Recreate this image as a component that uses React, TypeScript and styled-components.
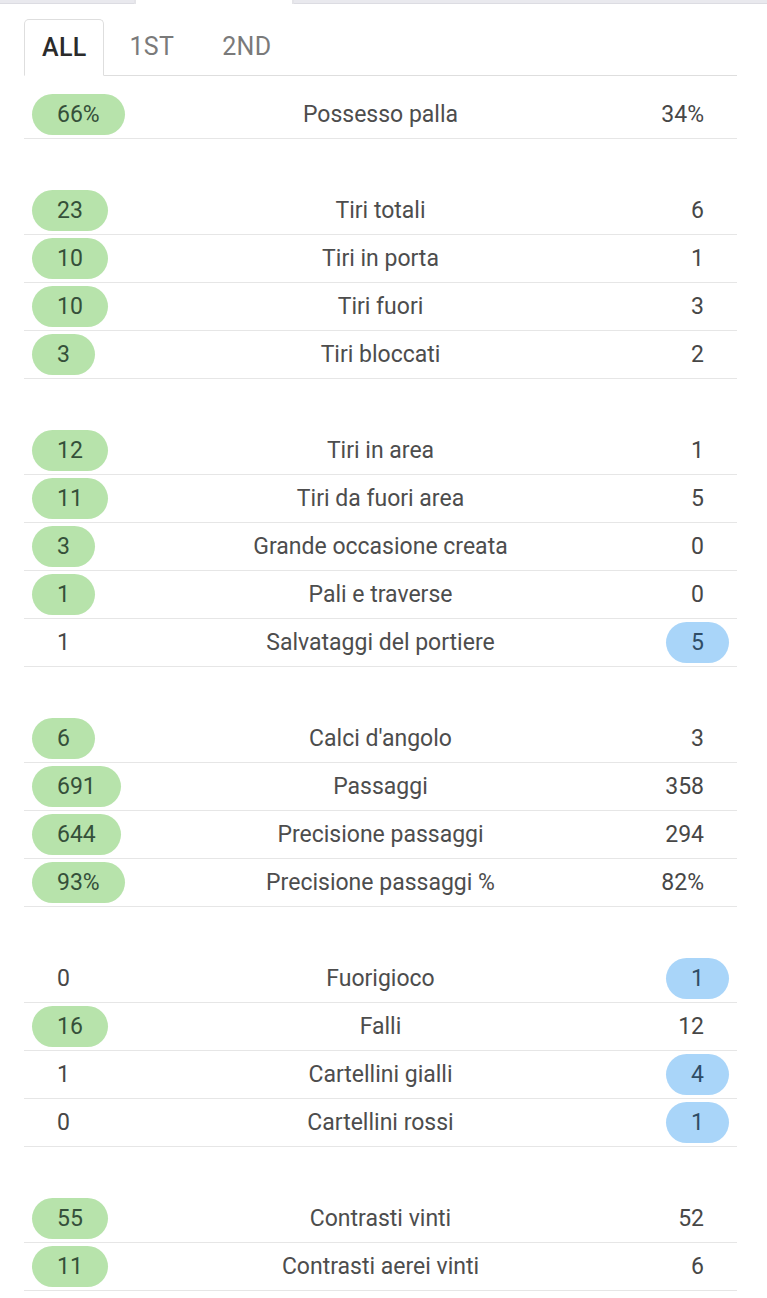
import React, { useState } from "react";
import styled, { createGlobalStyle } from "styled-components";

const Global = createGlobalStyle`
  html, body { margin: 0; padding: 0; background: #ffffff; }
  body { font-family: Roboto, "Noto Sans", Arial, sans-serif; -webkit-font-smoothing: antialiased; }
`;

const Page = styled.div`
  width: 767px;
  background: #fff;
`;

const TopStrip = styled.div`
  display: flex;
  height: 4px;
`;

const StripPart = styled.div<{ $active?: boolean; $w?: number }>`
  ${(p) => (p.$w ? `width: ${p.$w}px;` : "flex: 1;")}
  background: ${(p) => (p.$active ? "#ffffff" : "#e9e9ee")};
  border-bottom: ${(p) => (p.$active ? "none" : "1px solid #dcdce2")};
  border-left: ${(p) => (p.$active ? "2px solid #e4e4e8" : "none")};
  border-right: ${(p) => (p.$active ? "2px solid #e4e4e8" : "none")};
`;

const Content = styled.div`
  padding: 15px 30px 0 24px;
`;

const Tabs = styled.div`
  display: flex;
  align-items: flex-end;
  gap: 2px;
  border-bottom: 1px solid #dedede;
  height: 56px;
  margin-bottom: 15px;
`;

const Tab = styled.button<{ $active?: boolean }>`
  height: 57px;
  margin-bottom: ${(p) => (p.$active ? "-1px" : "0")};
  padding: ${(p) => (p.$active ? "0 17px" : "0 22px")};
  background: ${(p) => (p.$active ? "#fff" : "transparent")};
  border: 1px solid ${(p) => (p.$active ? "#dedede" : "transparent")};
  border-bottom-color: ${(p) => (p.$active ? "#fff" : "transparent")};
  border-radius: 5px 5px 0 0;
  font-family: Roboto, Arial, sans-serif;
  font-size: 25px;
  font-weight: ${(p) => (p.$active ? 500 : 400)};
  color: ${(p) => (p.$active ? "#2b2b2b" : "#7a7a7a")};
  letter-spacing: 0.3px;
  cursor: pointer;
  display: flex;
  align-items: center;
`;

const Row = styled.div`
  display: grid;
  grid-template-columns: 160px 1fr 160px;
  align-items: center;
  height: 47px;
  border-bottom: 1px solid #e6e6e6;
`;

const Spacer = styled.div`
  height: 48px;
`;

const Label = styled.div`
  text-align: center;
  font-size: 23px;
  color: #4d4d4d;
  white-space: nowrap;
`;

const Cell = styled.div<{ $side: "l" | "r" }>`
  display: flex;
  justify-content: ${(p) => (p.$side === "l" ? "flex-start" : "flex-end")};
  padding: ${(p) => (p.$side === "l" ? "0 0 0 8px" : "0 8px 0 0")};
`;

const Value = styled.span<{ $tone?: "green" | "blue" }>`
  display: inline-flex;
  align-items: center;
  justify-content: center;
  height: 41px;
  padding: 0 25px;
  border-radius: 21px;
  font-size: 23px;
  background: ${(p) =>
    p.$tone === "green" ? "#b7e3ab" : p.$tone === "blue" ? "#a9d5f9" : "transparent"};
  color: ${(p) =>
    p.$tone === "green" ? "#35503a" : p.$tone === "blue" ? "#2f4d66" : "#474747"};
`;

type Stat = [string, string, string];

const groups: Stat[][] = [
  [["66%", "Possesso palla", "34%"]],
  [
    ["23", "Tiri totali", "6"],
    ["10", "Tiri in porta", "1"],
    ["10", "Tiri fuori", "3"],
    ["3", "Tiri bloccati", "2"],
  ],
  [
    ["12", "Tiri in area", "1"],
    ["11", "Tiri da fuori area", "5"],
    ["3", "Grande occasione creata", "0"],
    ["1", "Pali e traverse", "0"],
    ["1", "Salvataggi del portiere", "5"],
  ],
  [
    ["6", "Calci d'angolo", "3"],
    ["691", "Passaggi", "358"],
    ["644", "Precisione passaggi", "294"],
    ["93%", "Precisione passaggi %", "82%"],
  ],
  [
    ["0", "Fuorigioco", "1"],
    ["16", "Falli", "12"],
    ["1", "Cartellini gialli", "4"],
    ["0", "Cartellini rossi", "1"],
  ],
  [
    ["55", "Contrasti vinti", "52"],
    ["11", "Contrasti aerei vinti", "6"],
  ],
];

const num = (s: string) => parseFloat(s.replace("%", ""));

export default function App() {
  const [tab, setTab] = useState("ALL");
  return (
    <Page>
      <Global />
      <TopStrip>
        <StripPart $w={134} />
        <StripPart $w={156} $active />
        <StripPart />
      </TopStrip>
      <Content>
        <Tabs>
          {["ALL", "1ST", "2ND"].map((t) => (
            <Tab key={t} $active={tab === t} onClick={() => setTab(t)}>
              {t}
            </Tab>
          ))}
        </Tabs>
        {groups.map((g, gi) => (
          <React.Fragment key={gi}>
            {gi > 0 && <Spacer />}
            {g.map(([l, label, r]) => {
              const lv = num(l);
              const rv = num(r);
              return (
                <Row key={label}>
                  <Cell $side="l">
                    <Value $tone={lv > rv ? "green" : undefined}>{l}</Value>
                  </Cell>
                  <Label>{label}</Label>
                  <Cell $side="r">
                    <Value $tone={rv > lv ? "blue" : undefined}>{r}</Value>
                  </Cell>
                </Row>
              );
            })}
          </React.Fragment>
        ))}
      </Content>
    </Page>
  );
}
